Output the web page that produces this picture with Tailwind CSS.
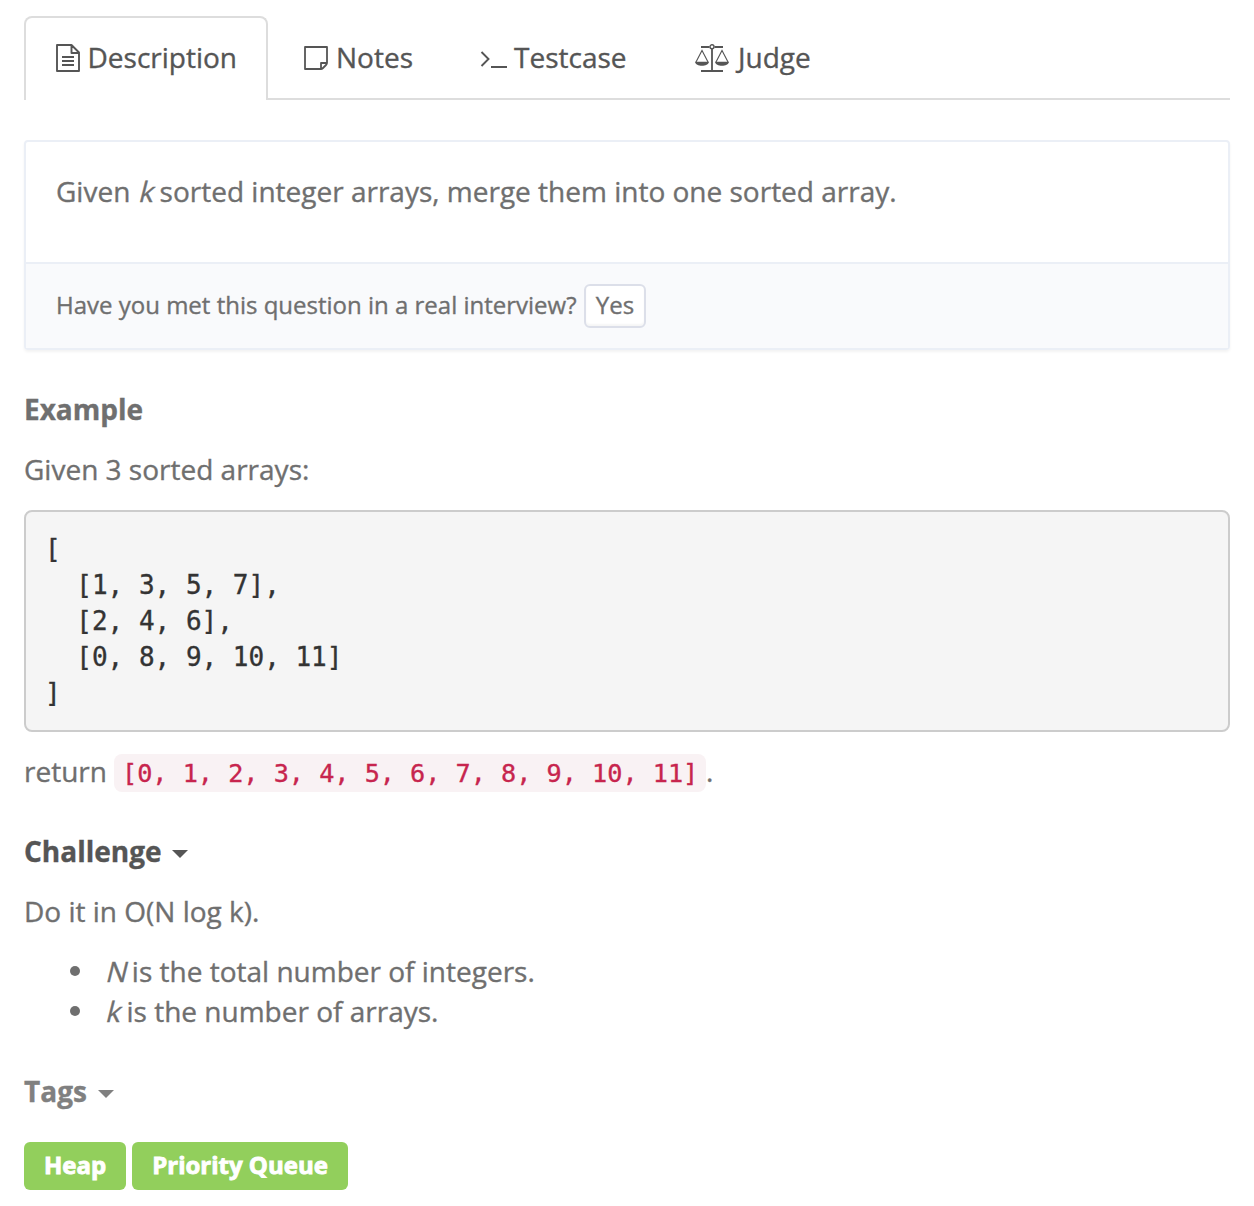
<!DOCTYPE html>
<html lang="en">
<head>
<meta charset="utf-8">
<title>Merge k Sorted Arrays</title>
<script src="https://cdn.jsdelivr.net/npm/@tailwindcss/browser@4"></script>
</head>
<body class="bg-white font-['Open_Sans',sans-serif] text-[28px] leading-[40px] text-[#6f6f6f] [-webkit-text-stroke:0.35px]">
<main class="px-6 pt-4">
  <nav class="flex h-[84px] gap-1 border-b-2 border-[#dddddd] text-[#555555]">
    <a class="flex h-[84px] w-[244px] shrink-0 items-center rounded-t-lg border-2 border-b-0 border-[#dddddd] bg-white pb-[4px] pl-[30px] whitespace-nowrap">
      <svg class="mt-[2px] mr-[7.500px] h-7 w-6 shrink-0" viewBox="0 0 24 28" fill="none" stroke="currentColor" stroke-width="1.9"><path d="M1 1h14.500l7.500 7.500V27H1zM15.500 1v8H23M6 13h12M6 17h12M6 21h12" stroke-linejoin="round"/></svg>
      <span>Description</span>
    </a>
    <a class="flex w-[172px] shrink-0 items-center pl-[32px] whitespace-nowrap">
      <svg class="mt-[2px] mr-[8px] h-6 w-6 shrink-0" viewBox="0 0 24 24" fill="none" stroke="currentColor" stroke-width="1.8" stroke-linejoin="round"><path d="M1 1h22v16q0 1-1 2l-3 3q-1 1-2 1H1zM17 23v-6h6"/></svg>
      <span>Notes</span>
    </a>
    <a class="flex w-[210px] shrink-0 items-center pl-[32px] whitespace-nowrap">
      <svg class="mt-[2px] mr-[7px] h-6 w-[27px] shrink-0" viewBox="0 0 27 24" fill="none" stroke="currentColor" stroke-width="1.9"><path d="M1.500 6l7 7-7 7M11 21h16"/></svg>
      <span>Testcase</span>
    </a>
    <a class="flex shrink-0 items-center pl-[33px] whitespace-nowrap">
      <svg class="mt-[2px] mr-[9px] h-7 w-[34px] shrink-0" viewBox="0 0 34 28" fill="none" stroke="currentColor"><path d="M6 3h8.500M19.500 3H28M17 5v21.500M6 27h22" stroke-width="1.8"/><circle cx="17" cy="2.800" r="2" stroke-width="1.400"/><path d="M1 18L7 6.500 13 18M21 18L27 6.500 33 18" stroke-width="1.100"/><path d="M0 17.800h14c-.6 5.400-13.400 5.400-14 0zM20 17.800h14c-.6 5.400-13.400 5.400-14 0z" fill="currentColor" stroke="none"/></svg>
      <span>Judge</span>
    </a>
  </nav>

  <section class="mt-10 h-[210px] rounded border-2 border-[#ebeff6] shadow-[0_2px_3px_rgba(0,0,0,0.05)]">
    <p class="h-[120px] px-[30px] pt-[29px]">Given <span class="inline-block origin-[50%_75%] -skew-x-[14deg]">k</span> sorted integer arrays, merge them into one sorted array.</p>
    <div class="flex h-[86px] items-center border-t-2 border-[#ebeff6] bg-[#f9fafc] px-[30px] text-[24px]">
      <span class="w-[528px] pb-[2px] whitespace-nowrap">Have you met this question in a real interview?</span>
      <button class="flex h-[44px] w-[62px] items-center justify-center rounded-md border-2 border-[#dcdfe9] bg-white pb-[2px] shadow-[inset_0_-2px_2px_rgba(0,0,0,0.04)]">Yes</button>
    </div>
  </section>

  <h2 class="mt-[39px] font-bold">Example</h2>
  <p class="mt-5">Given 3 sorted arrays:</p>
  <pre class="mt-[21px] h-[222px] rounded-lg border-2 border-[#cccccc] bg-[#f5f5f5] p-[19px] font-['DejaVu_Sans_Mono',monospace] text-[26px] leading-[36px] text-[#333333]">[
  [1, 3, 5, 7],
  [2, 4, 6],
  [0, 8, 9, 10, 11]
]</pre>
  <p class="mt-[19px] flex h-10 whitespace-nowrap"><span class="w-[90px]">return</span><code class="mt-[3px] h-[38px] w-[592px] rounded-lg bg-[#f9f2f4] pl-2 font-['DejaVu_Sans_Mono',monospace] text-[25.200px] leading-[40px] text-[#c7254e]">[0, 1, 2, 3, 4, 5, 6, 7, 8, 9, 10, 11]</code><span>.</span></p>

  <h2 class="mt-10 flex items-center font-bold text-[#555555]">Challenge<svg class="mt-[5px] ml-[10px] h-2 w-4" viewBox="0 0 16 8" fill="currentColor"><path d="M0 0h16L8 8z"/></svg></h2>
  <p class="mt-5">Do it in O(N log k).</p>
  <ul class="mt-5">
    <li class="flex items-center"><span class="ml-[46px] mr-[24.500px] size-[10px] rounded-full bg-[#6f6f6f]"></span><span><span class="mr-[-1px] inline-block origin-[50%_75%] -skew-x-[14deg]">N</span> is the total number of integers.</span></li>
    <li class="flex items-center"><span class="ml-[46px] mr-[24.500px] size-[10px] rounded-full bg-[#6f6f6f]"></span><span><span class="inline-block origin-[50%_75%] -skew-x-[14deg]">k</span> is the number of arrays.</span></li>
  </ul>

  <h2 class="mt-10 flex items-center font-bold text-[#808080]">Tags<svg class="mt-[5px] ml-[11px] h-2 w-4" viewBox="0 0 16 8" fill="currentColor"><path d="M0 0h16L8 8z"/></svg></h2>
  <div class="mt-[31px] flex gap-[6px] text-[24px] font-bold whitespace-nowrap text-white [-webkit-text-stroke:0.9px]">
    <span class="flex h-12 w-[102px] items-center justify-center rounded-md bg-[#92cf5c] pb-[2px]">Heap</span>
    <span class="flex h-12 w-[216px] items-center justify-center rounded-md bg-[#92cf5c] pb-[2px]">Priority Queue</span>
  </div>
</main>
</body>
</html>
